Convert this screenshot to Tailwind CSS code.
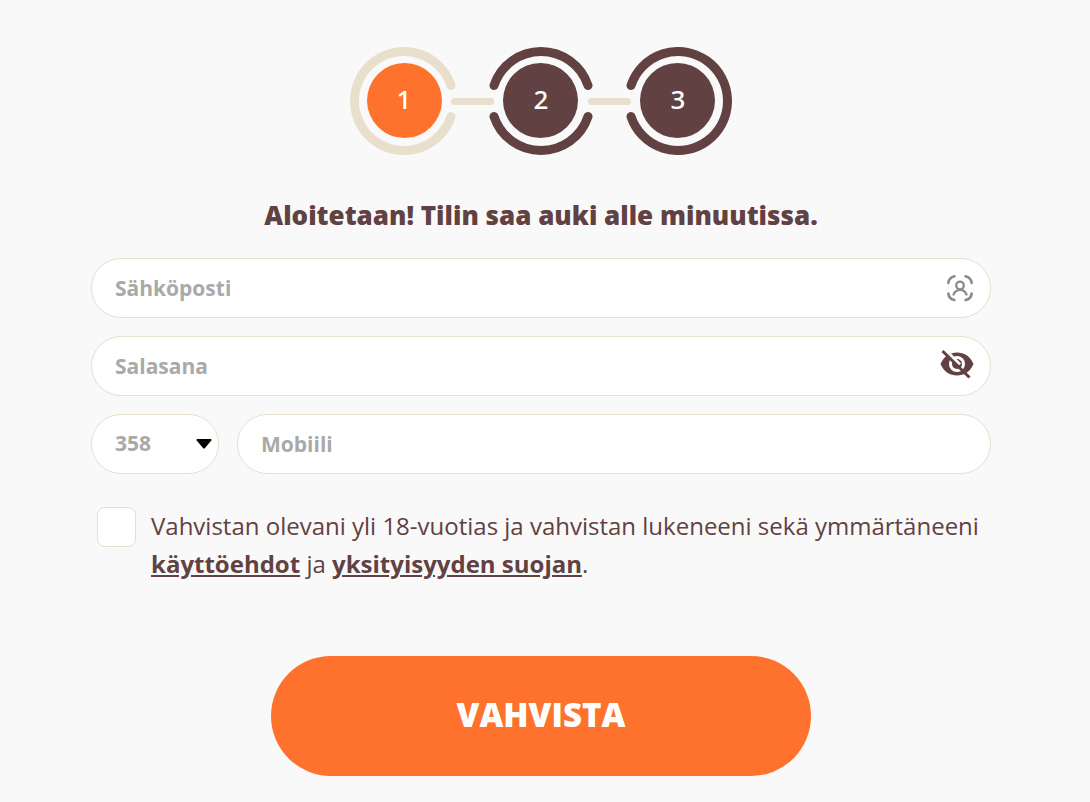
<!DOCTYPE html>
<html lang="fi">
<head>
<meta charset="utf-8">
<meta name="viewport" content="width=device-width, initial-scale=1">
<title>Rekisteröidy</title>
<script src="https://cdn.jsdelivr.net/npm/@tailwindcss/browser@4"></script>
</head>
<body class="min-h-screen bg-[#f9f9f9] font-['Open_Sans','Noto_Sans',sans-serif] text-[#614141]">
<main class="pt-[47px] pb-6 pl-[91px] pr-[99px]">
  <ol class="flex items-center justify-center font-['Noto_Sans',sans-serif] text-[26px] leading-9 font-medium text-white">
    <li class="grid place-items-center">
      <svg class="col-start-1 row-start-1" width="108" height="108" viewBox="0 0 108 108" aria-hidden="true">
        <path d="M101 38.500A49.500 49.500 0 1 0 101 69.500" fill="none" stroke="#e8dfcd" stroke-width="9" stroke-linecap="round"/>
        <circle cx="54.500" cy="53.500" r="37.500" fill="#ff722d"/>
      </svg>
      <span class="col-start-1 row-start-1 pb-1">1</span>
    </li>
    <li class="-mx-[7px] h-[7px] w-[43px] rounded-full bg-[#e8dfcd]" aria-hidden="true"></li>
    <li class="grid place-items-center">
      <svg class="col-start-1 row-start-1" width="108" height="108" viewBox="0 0 108 108" aria-hidden="true">
        <path d="M7 38.500A49.500 49.500 0 0 1 101 38.500M7 69.500A49.500 49.500 0 0 0 101 69.500" fill="none" stroke="#614141" stroke-width="9" stroke-linecap="round"/>
        <circle cx="53.500" cy="53.500" r="37.500" fill="#614141"/>
      </svg>
      <span class="col-start-1 row-start-1 pb-1">2</span>
    </li>
    <li class="-mx-[7px] h-[7px] w-[43px] rounded-full bg-[#e8dfcd]" aria-hidden="true"></li>
    <li class="grid place-items-center">
      <svg class="col-start-1 row-start-1" width="108" height="108" viewBox="0 0 108 108" aria-hidden="true">
        <path d="M7 38.500A49.500 49.500 0 1 1 7 69.500" fill="none" stroke="#614141" stroke-width="9" stroke-linecap="round"/>
        <circle cx="53.500" cy="53.500" r="37.500" fill="#614141"/>
      </svg>
      <span class="col-start-1 row-start-1 pb-1">3</span>
    </li>
  </ol>

  <h1 class="mt-10 text-center text-[26px] leading-10 font-extrabold">Aloitetaan! Tilin saa auki alle minuutissa.</h1>

  <form class="mt-[23px]">
    <div class="flex flex-col gap-[18px] text-[21px] font-bold">
      <div class="flex h-[60px] items-center rounded-full border border-[#e8dfcd] bg-white pr-4 pl-[23px]">
        <input type="email" aria-label="Sähköposti" placeholder="Sähköposti" class="h-full min-w-0 flex-1 bg-transparent outline-none placeholder:text-[#a9a9a9]">
        <svg width="28" height="28" viewBox="0 0 28 28" fill="none" stroke="#8b8b8d" stroke-linecap="round" aria-hidden="true">
          <path stroke-width="2.600" d="M2.300 9Q3 3.500 8.500 2.300M19.500 2.300Q25 3.500 25.700 9M25.700 19.500Q25 25 19.500 26M8.500 26Q3 25 2.300 19.500"/>
          <circle cx="14" cy="11.500" r="3.800" stroke-width="2.300"/>
          <path stroke-width="2.300" d="M7.500 20.500Q9.500 16 14 15.800T20.500 20.500"/>
        </svg>
      </div>
      <div class="flex h-[60px] items-center rounded-full border border-[#e8dfcd] bg-white pr-4 pl-[23px]">
        <input type="password" aria-label="Salasana" placeholder="Salasana" class="h-full min-w-0 flex-1 bg-transparent outline-none placeholder:text-[#a9a9a9]">
        <button type="button" aria-label="Näytä salasana" class="pb-1">
          <svg width="34" height="30" viewBox="0 0 34 30" aria-hidden="true">
            <path d="M.5 15C4 7 10 3.500 17 3.500S30 7 33.500 15C30 23 24 26.500 17 26.500S4 23 .5 15Z" fill="#614141"/>
            <circle cx="17" cy="15" r="8" fill="#fff"/>
            <circle cx="17" cy="15" r="5" fill="#614141"/>
            <path d="M4.500 0L20 15.500" stroke="#fff" stroke-width="3"/>
            <path d="M2.500 2L29.500 28.500" stroke="#614141" stroke-width="3"/>
          </svg>
        </button>
      </div>
      <div class="flex gap-[18px]">
        <div class="relative w-32">
          <select aria-label="Maakoodi" class="h-[60px] w-full appearance-none rounded-full border border-[#e8dfcd] bg-white pl-[23px] text-[#a9a9a9] outline-none"><option>358</option></select>
          <svg class="pointer-events-none absolute top-[25px] right-[7px]" width="16" height="10" viewBox="0 0 16 10" aria-hidden="true"><path d="M1.200 0H14.800Q16 .2 15.300 1.500L9 9Q8 10 7 9L.7 1.500Q0 .2 1.200 0Z"/></svg>
        </div>
        <input type="tel" aria-label="Mobiili" placeholder="Mobiili" class="h-[60px] min-w-0 flex-1 rounded-full border border-[#e8dfcd] bg-white px-[23px] outline-none placeholder:text-[#a9a9a9]">
      </div>
    </div>

    <div class="mt-[33px] ml-[6px] flex items-start gap-[15px]">
      <input id="terms" type="checkbox" class="h-10 w-[39px] shrink-0 appearance-none rounded-lg border border-[#e8dfcd] bg-white checked:bg-[#ff722d]">
      <label for="terms" class="text-2xl leading-[38px]">Vahvistan olevani yli 18-vuotias ja vahvistan lukeneeni sekä ymmärtäneeni <a href="#" class="font-bold underline">käyttöehdot</a> ja <a href="#" class="font-bold underline">yksityisyyden suojan</a>.</label>
    </div>

    <button type="submit" class="mx-auto mt-[73px] block h-[120px] w-3/5 rounded-full bg-[#ff722d] pb-0.5 text-[33px] font-extrabold text-white">VAHVISTA</button>
  </form>
</main>
</body>
</html>
